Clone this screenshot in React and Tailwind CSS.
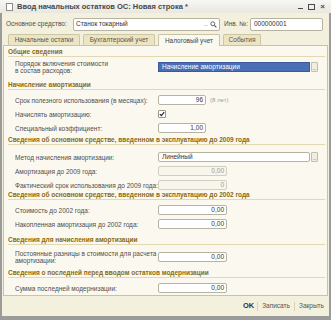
import React from 'react';

const font = { fontFamily: '"Liberation Sans", Arial, sans-serif' };

function Section({ title, className = '' }) {
  return (
    <div className={`h-[10px] mr-[2px] flex items-end border-b border-[#e2d8b2] ${className}`}>
      <span className="text-[6.5px] leading-[8px] font-bold text-[#8a6a10] whitespace-nowrap">{title}</span>
    </div>
  );
}

function Row({ label, children, className = 'h-[14px]' }) {
  return (
    <div className={`flex items-center ${className}`}>
      <div className="w-[150px] pl-[7px] text-[6.5px] leading-[7px] text-[#4e4e4e]">{label}</div>
      <div className="flex items-center flex-1 pr-[3px]">{children}</div>
    </div>
  );
}

function NumInput({ value, wide = false, disabled = false }) {
  return (
    <div
      className={`h-[10px] flex items-center justify-end pr-[2px] rounded-[2px] border text-[6.5px] leading-none
        ${wide ? 'w-[69px]' : 'w-[48px]'}
        ${disabled ? 'bg-[#f7f5ec] border-[#d3cfc0] text-[#9a9a9a]' : 'bg-white border-[#b7b3a2] text-[#333]'}`}
    >
      {value}
    </div>
  );
}

function DotsButton() {
  return (
    <div className="w-[7px] h-[10px] ml-[1px] flex items-end justify-center rounded-[1px] border border-[#c4bfa9] bg-[#f1eee0] text-[5px] leading-[6px] text-[#555]">
      ...
    </div>
  );
}

export default function App() {
  return (
    <div className="w-[331px] h-[320px] overflow-hidden bg-[#9b9b9b] flex flex-col" style={font}>
      {/* title bar */}
      <div className="h-[13px] flex items-center bg-gradient-to-b from-[#f7f7f4] to-[#e8e7e0] px-[6px]">
        <div className="w-[7px] h-[8px] border border-[#8c8c8c] bg-white mr-[4px]" />
        <span className="text-[7.5px] font-bold text-[#474747] whitespace-nowrap">
          Ввод начальных остатков ОС: Новая строка *
        </span>
        <div className="ml-auto flex items-center gap-[5px] text-[#4a4a4a]">
          <div className="w-[5px] h-[1.5px] bg-[#4a4a4a] mt-[4px]" />
          <div className="w-[7px] h-[6px] border border-[#4a4a4a]" />
          <span className="text-[8px] font-bold leading-none">×</span>
        </div>
      </div>

      {/* body */}
      <div className="flex-1 mx-[2px] mb-[4px] bg-[#f3f0dd] flex flex-col px-[1px]">
        {/* header row */}
        <div className="h-[14px] mt-[4px] flex items-center pl-[3px] pr-[5px] text-[6.5px] text-[#4e4e4e]">
          <span className="w-[67px]">Основное средство:</span>
          <div className="h-[13px] w-[147px] flex items-center bg-white border border-[#b7b3a2] rounded-[2px] pl-[2px] text-[#333]">
            <span>Станок токарный</span>
            <span className="ml-auto text-[5px] text-[#555] mt-[1px]">...</span>
            <svg width="7" height="7" viewBox="0 0 8 8" className="mx-[2px]">
              <circle cx="3.2" cy="3.2" r="2.3" fill="none" stroke="#555" strokeWidth="1" />
              <line x1="5" y1="5" x2="7.3" y2="7.3" stroke="#555" strokeWidth="1.2" />
            </svg>
          </div>
          <span className="ml-[4px] w-[26px]">Инв. №:</span>
          <div className="h-[13px] flex-1 flex items-center bg-white border border-[#b7b3a2] rounded-[2px] pl-[3px] text-[#333]">
            000000001
          </div>
        </div>

        {/* tabs */}
        <div className="h-[12px] mt-[2px] flex items-end pl-[5px] gap-[3px] text-[6.5px] text-[#555]">
          <div className="w-[72px] h-[11px] flex items-center justify-center bg-[#ece5c3] border border-b-0 border-[#cdc5a3] rounded-t-[2px]">Начальные остатки</div>
          <div className="w-[72px] h-[11px] flex items-center justify-center bg-[#ece5c3] border border-b-0 border-[#cdc5a3] rounded-t-[2px]">Бухгалтерский учет</div>
          <div className="w-[62px] h-[12px] -mb-[1px] flex items-center justify-center bg-[#fbf9ef] border border-b-0 border-[#c9c2a4] rounded-t-[2px] text-[#444] relative">Налоговый учет</div>
          <div className="w-[38px] h-[11px] flex items-center justify-center bg-[#ece5c3] border border-b-0 border-[#cdc5a3] rounded-t-[2px]">События</div>
        </div>

        {/* panel */}
        <div className="h-[251px] bg-[#fbf9ef] border border-[#c9c2a4] flex flex-col pl-[4px]">
          <Section title="Общие сведения" className="mt-[1px]" />
          <Row label={<>Порядок включения стоимости<br />в состав расходов:</>} className="h-[18px] mt-[1px]">
            <div className="h-[10px] w-[152px] flex items-center bg-[#4a6fb5] border border-[#3b5a98] pl-[3px] text-[6.5px] text-white">
              Начисление амортизации
            </div>
            <DotsButton />
          </Row>

          <Section title="Начисление амортизации" className="mt-[4px]" />
          <div className="mt-[3px]" />
          <Row label="Срок полезного использования (в месяцах):">
            <NumInput value="96" />
            <span className="ml-[4px] text-[6px] text-[#9a9a9a]">(8 лет)</span>
          </Row>
          <Row label="Начислять амортизацию:">
            <div className="w-[8px] h-[8px] flex items-center justify-center bg-white border border-[#9a968a] rounded-[1px]">
              <svg width="6" height="6" viewBox="0 0 6 6">
                <path d="M0.8 3.1 L2.4 4.6 L5.2 1.2" fill="none" stroke="#222" strokeWidth="1.1" />
              </svg>
            </div>
          </Row>
          <Row label="Специальный коэффициент:">
            <NumInput value="1,00" />
          </Row>

          <Section title="Сведения об основном средстве, введенном в эксплуатацию до 2009 года" />
          <div className="mt-[5px]" />
          <Row label="Метод начисления амортизации:">
            <div className="h-[10px] w-[152px] flex items-center bg-white border border-[#b7b3a2] rounded-[2px] pl-[3px] text-[6.5px] text-[#333]">
              Линейный
            </div>
            <DotsButton />
          </Row>
          <Row label="Амортизация до 2009 года:">
            <NumInput value="0,00" wide disabled />
          </Row>
          <Row label="Фактический срок использования до 2009 года:">
            <NumInput value="0" wide disabled />
          </Row>

          <Section title="Сведения об основном средстве, введенном в эксплуатацию до 2002 года" className="-mt-[2px]" />
          <div className="mt-[3px]" />
          <Row label="Стоимость до 2002 года:">
            <NumInput value="0,00" wide />
          </Row>
          <Row label="Накопленная амортизация до 2002 года:">
            <NumInput value="0,00" wide />
          </Row>

          <Section title="Сведения для начисления амортизации" className="mt-[4px]" />
          <Row label={<>Постоянные разницы в стоимости для расчета<br />амортизации:</>} className="h-[16px] mt-[4px]">
            <NumInput value="0,00" wide />
          </Row>

          <Section title="Сведения о последней перед вводом остатков модернизации" className="mt-[3px]" />
          <Row label="Сумма последней модернизации:" className="h-[14px] mt-[3px]">
            <NumInput value="0,00" wide />
          </Row>
        </div>

        {/* footer */}
        <div className="flex-1 flex items-center justify-end pr-[4px] text-[6.5px] text-[#555]">
          <span className="font-bold text-[7.5px] text-[#333] px-[3px]">OK</span>
          <span className="w-px h-[9px] bg-[#d6d1bc]" />
          <span className="px-[4px]">Записать</span>
          <span className="w-px h-[9px] bg-[#d6d1bc]" />
          <span className="pl-[4px]">Закрыть</span>
        </div>
      </div>
    </div>
  );
}
